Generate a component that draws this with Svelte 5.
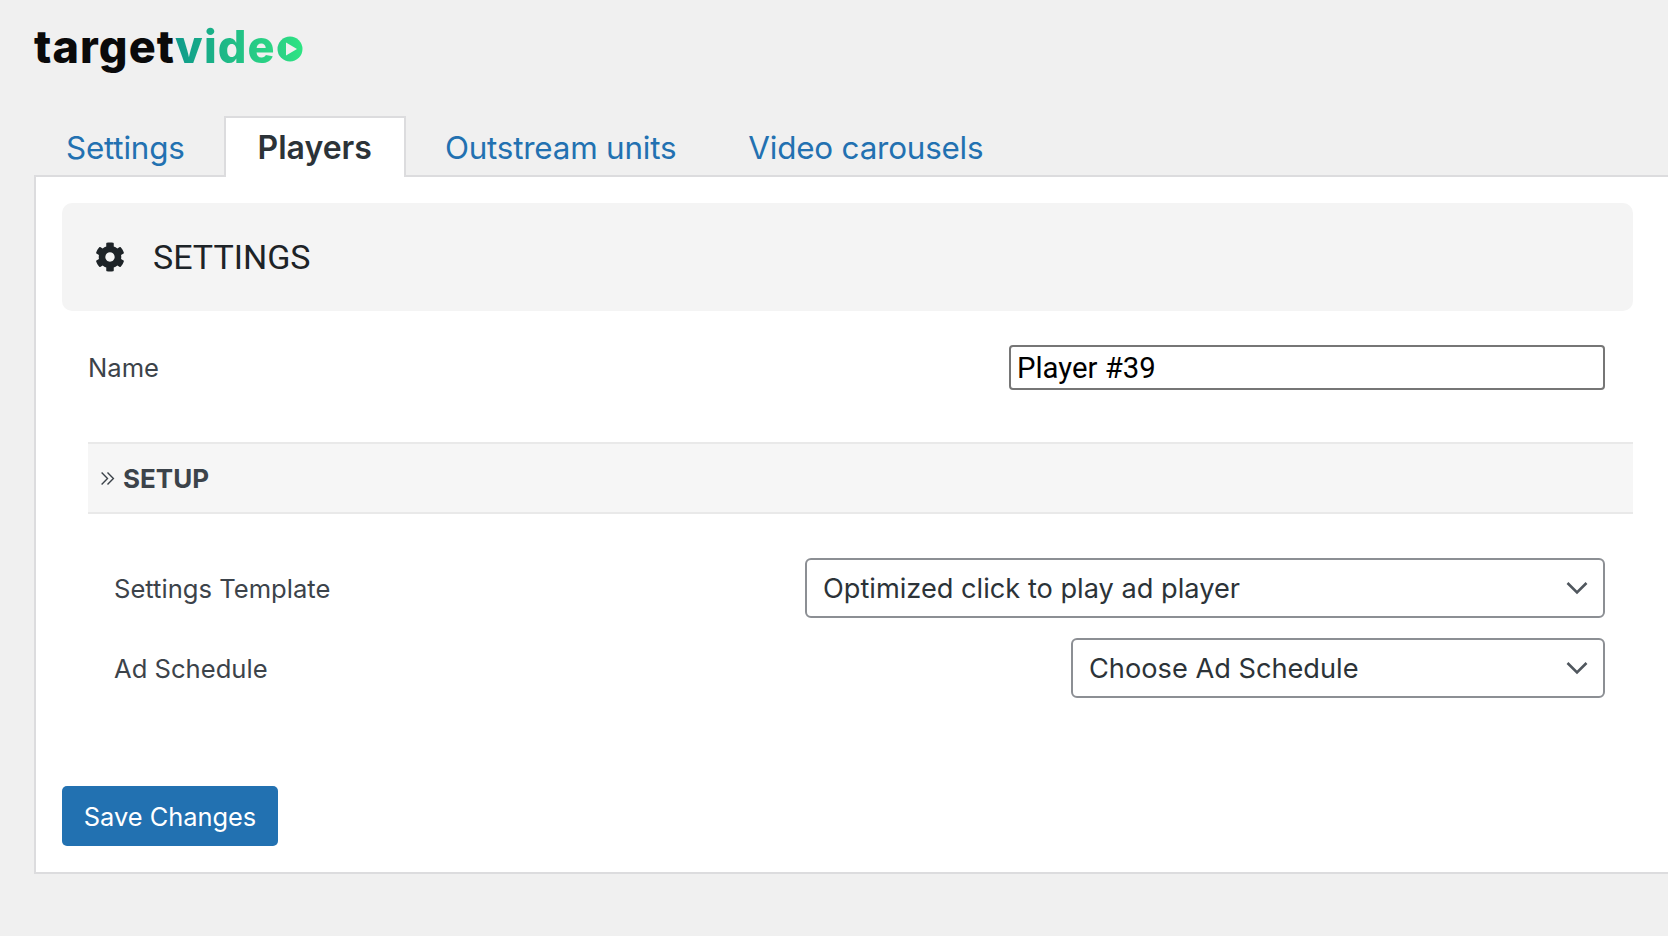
<script>
  const tabs = ['Settings', 'Players', 'Outstream units', 'Video carousels'];
  let active = 'Players';
  let name = 'Player #39';
</script>

<div class="page">
  <div class="logo">
    <span class="logo-dark">target</span><span class="logo-green">vide</span>
    <svg class="logo-play" viewBox="0 0 26 26" width="26" height="26">
      <defs>
        <linearGradient id="play-grad" x1="0" x2="1" y1="0" y2="0">
          <stop offset="0" stop-color="#2bcf85" />
          <stop offset="1" stop-color="#2de583" />
        </linearGradient>
      </defs>
      <circle cx="13" cy="13" r="12.5" fill="url(#play-grad)" />
      <path d="M9 6.5 L20 13 L9 19.5 Z" fill="#f0f0f0" />
    </svg>
  </div>

  <nav class="tabs">
    {#each tabs as tab}
      <button type="button" class="tab" class:active={tab === active} on:click={() => (active = tab)}>{tab}</button>
    {/each}
  </nav>

  <div class="panel">
    <div class="panel-head">
      <svg class="gear" viewBox="0 0 512 512" width="30" height="30" fill="currentColor"><path d="M487.4 315.7l-42.6-24.6c4.3-23.2 4.3-47 0-70.2l42.6-24.6c4.9-2.8 7.1-8.6 5.5-14-11.1-35.6-30-67.8-54.7-94.6-3.8-4.1-10-5.1-14.8-2.3L380.8 110c-17.9-15.4-38.5-27.3-60.8-35.1V25.8c0-5.6-3.9-10.5-9.4-11.7-36.7-8.2-74.3-7.8-109.2 0-5.5 1.2-9.4 6.1-9.4 11.7V75c-22.2 7.9-42.8 19.8-60.8 35.1L88.7 85.5c-4.9-2.8-11-1.9-14.8 2.3-24.7 26.7-43.6 58.9-54.7 94.6-1.7 5.4.6 11.2 5.5 14L67.3 221c-4.3 23.2-4.3 47 0 70.2l-42.6 24.6c-4.9 2.8-7.1 8.6-5.5 14 11.1 35.6 30 67.8 54.7 94.6 3.8 4.1 10 5.1 14.8 2.3l42.6-24.6c17.9 15.4 38.5 27.3 60.8 35.1v49.2c0 5.6 3.9 10.5 9.4 11.7 36.7 8.2 74.3 7.8 109.2 0 5.5-1.2 9.4-6.1 9.4-11.7v-49.2c22.2-7.9 42.8-19.8 60.8-35.1l42.6 24.6c4.9 2.8 11 1.9 14.8-2.3 24.7-26.7 43.6-58.9 54.7-94.6 1.5-5.5-.7-11.3-5.6-14.1zM256 336c-44.1 0-80-35.9-80-80s35.9-80 80-80 80 35.9 80 80-35.9 80-80 80z" /></svg>
      <h2>SETTINGS</h2>
    </div>

    <div class="name-row">
      <label for="player-name">Name</label>
      <input id="player-name" type="text" bind:value={name} />
    </div>

    <div class="section-head">
      <svg viewBox="0 0 14 14" width="15" height="15" fill="none" stroke="currentColor" stroke-width="1.3"><path d="M1.5 1.5 L7 7 L1.5 12.5 M7 1.5 L12.5 7 L7 12.5" /></svg>
      <span>SETUP</span>
    </div>

    <div class="fields">
      <div class="field">
        <label for="template">Settings Template</label>
        <div class="select-wrap wide">
          <select id="template">
            <option>Optimized click to play ad player</option>
          </select>
          <svg class="chevron" viewBox="0 0 22 14" width="22" height="14" fill="none" stroke="#50575e" stroke-width="2.6"><path d="M1.5 2 L11 11.5 L20.5 2" /></svg>
        </div>
      </div>
      <div class="field">
        <label for="schedule">Ad Schedule</label>
        <div class="select-wrap narrow">
          <select id="schedule">
            <option>Choose Ad Schedule</option>
          </select>
          <svg class="chevron" viewBox="0 0 22 14" width="22" height="14" fill="none" stroke="#50575e" stroke-width="2.6"><path d="M1.5 2 L11 11.5 L20.5 2" /></svg>
        </div>
      </div>
    </div>

    <button type="button" class="save">Save Changes</button>
  </div>
</div>

<style>
  :global(body) {
    background: #f0f0f0;
    overflow: hidden;
  }

  .page {
    height: 936px;
    padding: 0 0 0 34px;
    box-sizing: border-box;
    font-family: Inter, "Liberation Sans", sans-serif;
    color: #3c434a;
  }

  .logo {
    display: flex;
    align-items: center;
    height: 95px;
    padding-bottom: 2px;
    box-sizing: border-box;
    font-family: Inter, sans-serif;
    font-weight: 800;
    font-size: 45px;
    letter-spacing: 1.1px;
    line-height: 1;
  }

  .logo-dark {
    color: #0a0a0a;
  }

  .logo-green {
    background: linear-gradient(90deg, #0f9a8a, #2dd884);
    -webkit-background-clip: text;
    background-clip: text;
    color: transparent;
  }

  .logo-play {
    margin-top: 5px;
    margin-left: 1px;
  }

  .tabs {
    display: flex;
    gap: 6px;
    height: 82px;
    box-sizing: border-box;
    padding-top: 20px;
    margin-left: -1px;
    align-items: flex-end;
    position: relative;
    z-index: 1;
    margin-bottom: -2px;
  }

  .tab {
    height: 61px;
    box-sizing: border-box;
    background: none;
    border: 2px solid transparent;
    border-bottom: none;
    padding: 0 31px;
    font-family: Inter, sans-serif;
    font-size: 31.4px;
    letter-spacing: -0.2px;
    color: #2271b1;
    cursor: pointer;
  }

  .tab.active {
    background: #fff;
    border-color: #dcdcde;
    color: #2c3338;
    padding: 0 32px;
    font-size: 32px;
    letter-spacing: 0;
    font-weight: 600;
  }

  .panel {
    border: 2px solid #dcdcde;
    border-right: none;
    background: #fff;
    height: 699px;
    box-sizing: border-box;
    padding: 26px 0 0 26px;
  }

  .panel-head {
    display: flex;
    align-items: center;
    gap: 28px;
    height: 108px;
    padding-left: 33px;
    margin-right: 35px;
    background: #f4f4f4;
    border-radius: 10px;
    color: #1d2327;
  }

  .panel-head h2 {
    margin: 0;
    font-family: Roboto, sans-serif;
    font-weight: 400;
    font-size: 34px;
  }

  .name-row {
    display: flex;
    justify-content: space-between;
    align-items: center;
    margin: 34px 63px 0 26px;
  }

  label {
    font-size: 25.6px;
    color: #3c434a;
  }

  input {
    width: 596px;
    height: 45px;
    box-sizing: border-box;
    border: 2px solid #767676;
    border-radius: 4px;
    padding: 0 6px;
    font-family: Roboto, sans-serif;
    font-size: 29.3px;
    color: #000;
    outline: none;
  }

  .section-head {
    display: flex;
    align-items: center;
    gap: 8px;
    height: 72px;
    box-sizing: border-box;
    margin: 52px 35px 0 26px;
    padding-left: 12px;
    background: #f6f6f6;
    border-top: 2px solid #e9e9e9;
    border-bottom: 2px solid #e9e9e9;
    font-size: 26px;
    font-weight: 700;
  }

  .fields {
    display: flex;
    flex-direction: column;
    gap: 20px;
    margin: 44px 63px 0 52px;
  }

  .field {
    display: flex;
    justify-content: space-between;
    align-items: center;
  }

  .select-wrap {
    position: relative;
    height: 60px;
  }

  .wide {
    width: 800px;
  }

  .narrow {
    width: 534px;
  }

  select {
    appearance: none;
    width: 100%;
    height: 100%;
    box-sizing: border-box;
    border: 2px solid #8c8f94;
    border-radius: 6px;
    background: #fff;
    padding: 0 16px;
    font-family: Inter, sans-serif;
    font-size: 27.2px;
    color: #2c3338;
  }

  .chevron {
    position: absolute;
    right: 17px;
    top: 23px;
    pointer-events: none;
  }

  .save {
    display: block;
    width: 216px;
    height: 60px;
    margin-top: 88px;
    border: none;
    border-radius: 5px;
    background: #2271b1;
    color: #fff;
    font-family: Inter, sans-serif;
    font-size: 25.4px;
    cursor: pointer;
  }
</style>
